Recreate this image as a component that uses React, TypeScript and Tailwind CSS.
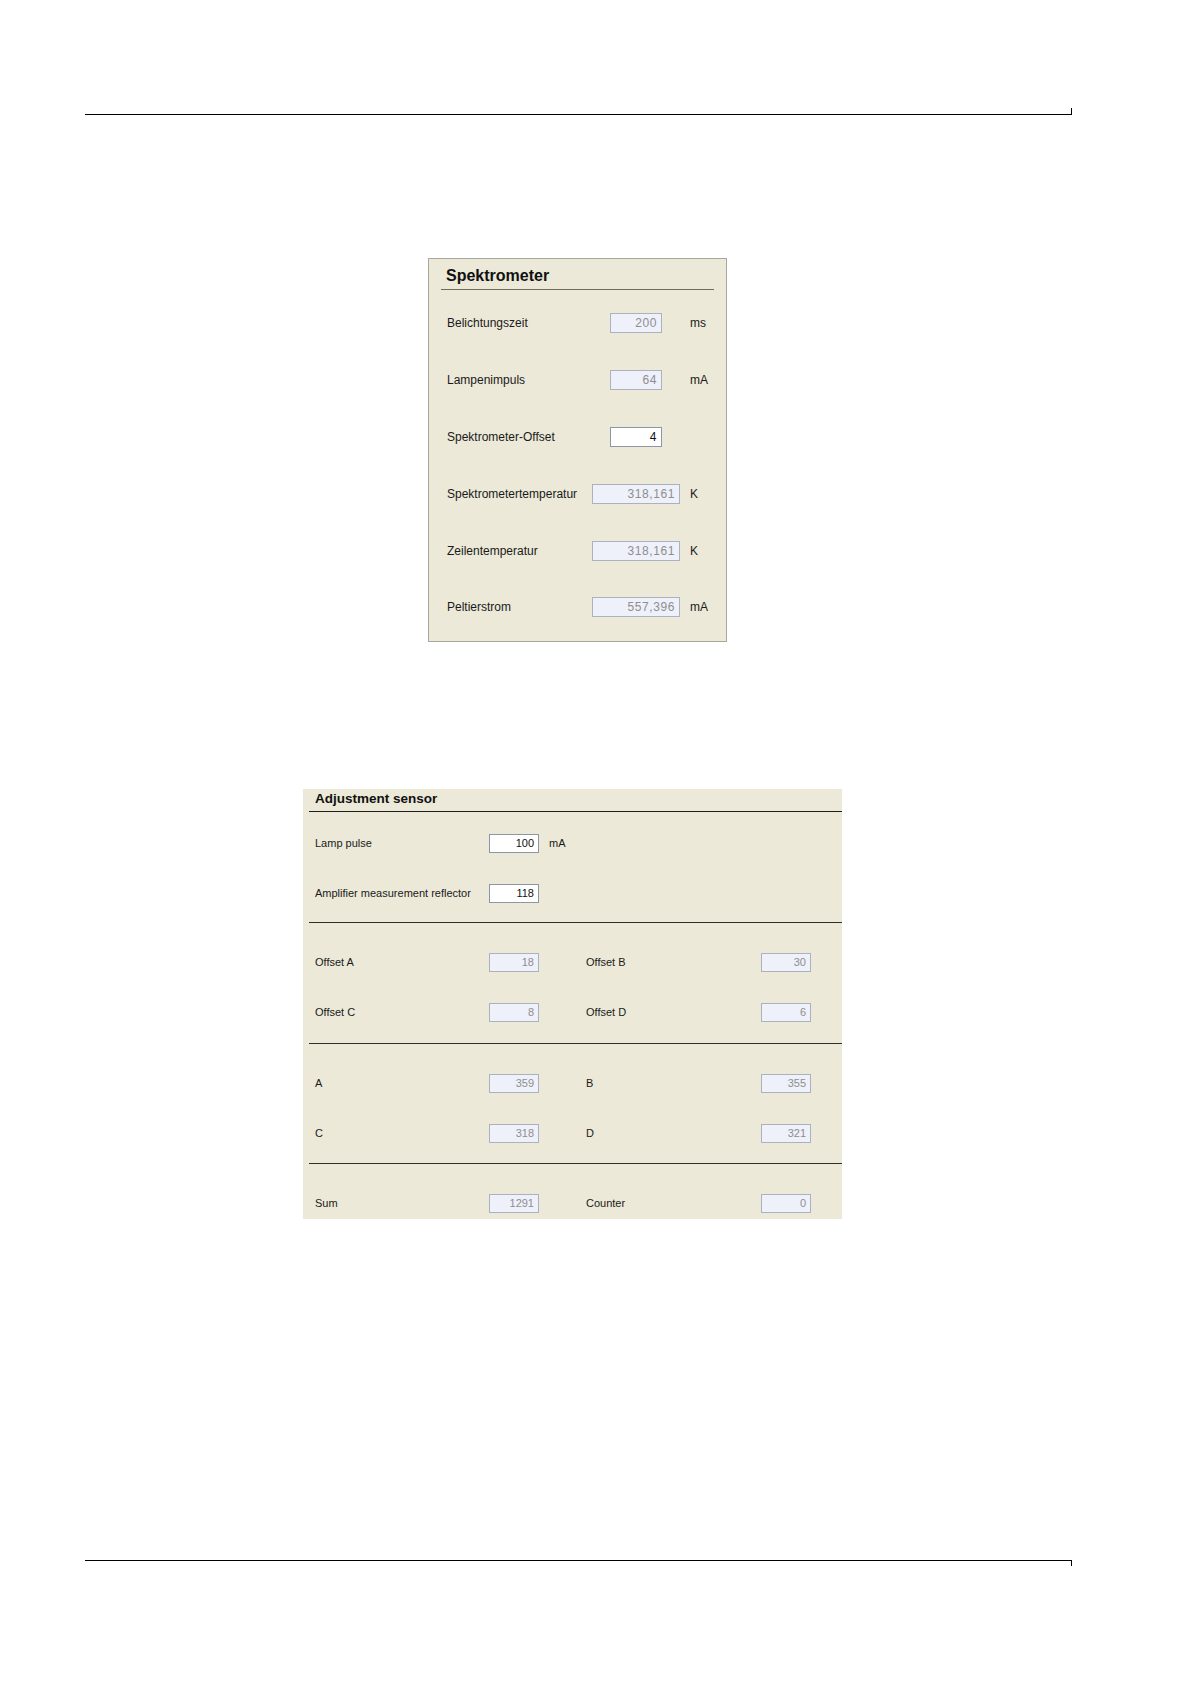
import React from "react";

const font = { fontFamily: '"Liberation Sans", Arial, sans-serif' };

function Field({
  value,
  editable,
  w,
  big,
}: {
  value: string;
  editable?: boolean;
  w: string;
  big?: boolean;
}) {
  return (
    <div
      className={
        "flex items-center justify-end pr-[4px] border " +
        w +
        (big ? " h-[20px] text-[12px] tracking-[0.6px]" : " h-[19px] text-[11px]") +
        (editable
          ? " bg-white border-[#8c96a4] text-[#111]"
          : " bg-[#eef0fa] border-[#aab2c0] text-[#8e8e8e]")
      }
    >
      {value}
    </div>
  );
}

function SpekRow({
  label,
  value,
  unit,
  wide,
  editable,
}: {
  label: string;
  value: string;
  unit?: string;
  wide?: boolean;
  editable?: boolean;
}) {
  return (
    <div className="flex items-center h-[56.8px] pl-[18px]">
      <div className="w-[145px] text-[12px] text-[#1a1a1a]">{label}</div>
      <div className="w-[88px] flex justify-center">
        <Field value={value} editable={editable} w={wide ? "w-[88px]" : "w-[52px]"} big />
      </div>
      <div className="ml-[10px] text-[12px] text-[#1a1a1a]">{unit}</div>
    </div>
  );
}

function AdjRow({
  l1,
  v1,
  e1,
  unit,
  l2,
  v2,
}: {
  l1: string;
  v1: string;
  e1?: boolean;
  unit?: string;
  l2?: string;
  v2?: string;
}) {
  return (
    <div className="flex items-center h-[50px] pl-[12px] text-[11px] text-[#1a1a1a]">
      <div className="w-[174px]">{l1}</div>
      <Field value={v1} editable={e1} w="w-[50px]" />
      {unit ? <div className="ml-[10px]">{unit}</div> : null}
      {l2 !== undefined ? (
        <>
          <div className="ml-[47px] w-[175px]">{l2}</div>
          <Field value={v2 || ""} w="w-[50px]" />
        </>
      ) : null}
    </div>
  );
}

function Sep() {
  return <div className="ml-[6px] h-px bg-[#2e2e2a]" />;
}

export default function App() {
  return (
    <div className="w-[1190px] h-[1684px] bg-white overflow-hidden" style={font}>
      {/* header rule */}
      <div className="pt-[114px]">
        <div className="ml-[85px] w-[987px] h-px bg-black relative">
          <div className="absolute right-0 bottom-0 w-px h-[7px] bg-black" />
        </div>
      </div>

      {/* Spektrometer panel */}
      <div className="mt-[143px] ml-[428px] w-[299px] h-[384px] bg-[#ece9d8] border border-[#a9a79a]">
        <div className="pl-[17px] pt-[7px] h-[30px] text-[16px] font-bold text-[#111] leading-[19px]">
          Spektrometer
        </div>
        <div className="mx-[12px] h-px bg-[#6e6b5e]" />
        <div className="pt-[5px]">
          <SpekRow label="Belichtungszeit" value="200" unit="ms" />
          <SpekRow label="Lampenimpuls" value="64" unit="mA" />
          <SpekRow label="Spektrometer-Offset" value="4" editable />
          <SpekRow label="Spektrometertemperatur" value="318,161" unit="K" wide />
          <SpekRow label="Zeilentemperatur" value="318,161" unit="K" wide />
          <SpekRow label="Peltierstrom" value="557,396" unit="mA" wide />
        </div>
      </div>

      {/* Adjustment sensor panel */}
      <div className="mt-[147px] ml-[303px] w-[539px] h-[430px] bg-[#ece9d8] overflow-hidden">
        <div className="pl-[12px] h-[22px] text-[13.5px] font-bold text-[#111] leading-[20px]">
          Adjustment sensor
        </div>
        <div className="ml-[6px] h-px bg-[#1e1e1a]" />
        <div className="pt-[6px] pb-[4px] h-[110px]">
          <AdjRow l1="Lamp pulse" v1="100" e1 unit="mA" />
          <AdjRow l1="Amplifier measurement reflector" v1="118" e1 />
        </div>
        <Sep />
        <div className="pt-[14px] h-[120px]">
          <AdjRow l1="Offset A" v1="18" l2="Offset B" v2="30" />
          <AdjRow l1="Offset C" v1="8" l2="Offset D" v2="6" />
        </div>
        <Sep />
        <div className="pt-[14px] h-[119px]">
          <AdjRow l1="A" v1="359" l2="B" v2="355" />
          <AdjRow l1="C" v1="318" l2="D" v2="321" />
        </div>
        <Sep />
        <div className="pt-[14px]">
          <AdjRow l1="Sum" v1="1291" l2="Counter" v2="0" />
        </div>
      </div>

      {/* footer rule */}
      <div className="mt-[341px] ml-[85px] w-[987px] h-px bg-black relative">
        <div className="absolute right-0 top-0 w-px h-[6px] bg-black" />
      </div>
    </div>
  );
}
